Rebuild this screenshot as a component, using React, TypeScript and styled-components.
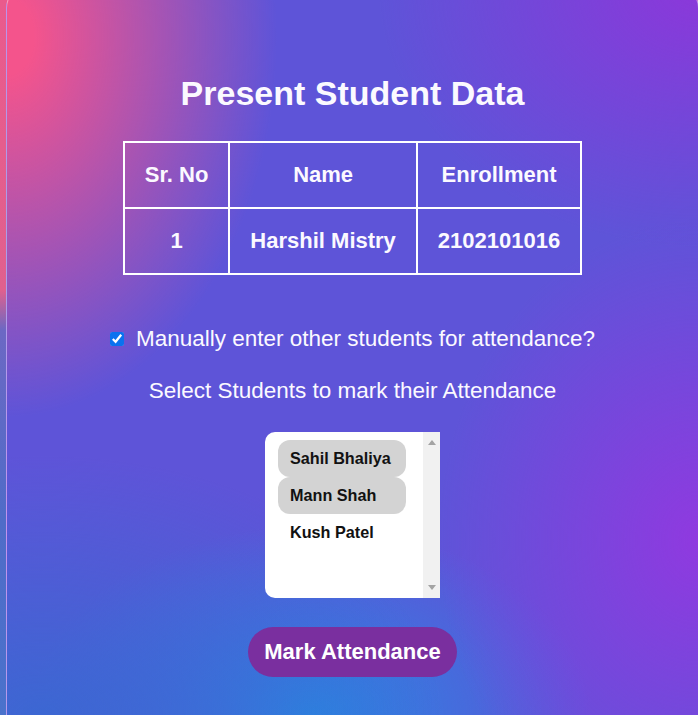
import React, { useState } from "react";
import styled, { createGlobalStyle } from "styled-components";

const GlobalStyle = createGlobalStyle`
  html, body {
    margin: 0;
    padding: 0;
    height: 715px;
    overflow: hidden;
  }
  body {
    font-family: "Liberation Sans", Arial, sans-serif;
    background: linear-gradient(
      to bottom,
      #ea5a8c 0px,
      #e0608e 290px,
      #6c68c4 330px,
      #4f6cc8 520px,
      #4a72cc 715px
    );
  }
`;

const Card = styled.div`
  margin: -14px 0 0 6px;
  width: 693px;
  height: 729px;
  box-sizing: border-box;
  border: 1px solid rgba(255, 255, 255, 0.45);
  border-bottom: 0;
  border-radius: 22px 22px 0 0;
  display: flex;
  flex-direction: column;
  align-items: center;
  color: #fbf9ff;
  background:
    radial-gradient(ellipse 270px 380px at 0px 50px, rgba(244, 84, 140, 1) 10%, rgba(244, 84, 140, 0) 100%),
    radial-gradient(ellipse 320px 260px at 100% 0%, rgba(142, 54, 218, 0.95), rgba(142, 54, 218, 0) 100%),
    radial-gradient(ellipse 260px 320px at 100% 76%, rgba(146, 56, 224, 0.95), rgba(146, 56, 224, 0) 100%),
    radial-gradient(ellipse 400px 260px at 5% 100%, rgba(58, 104, 210, 0.95), rgba(58, 104, 210, 0) 100%),
    radial-gradient(ellipse 280px 190px at 44% 100%, rgba(38, 138, 226, 0.95), rgba(38, 138, 226, 0) 100%),
    #5e54d8;
`;

const Title = styled.h1`
  margin: 87px 0 0;
  font-size: 34px;
  font-weight: bold;
  line-height: 39px;
`;

const Table = styled.table`
  margin-top: 28px;
  border-collapse: collapse;
`;

const Cell = styled.td`
  border: 2px solid #ffffff;
  padding: 19px 20px;
  font-size: 22px;
  line-height: 26px;
  font-weight: bold;
  text-align: center;
  white-space: nowrap;
`;

const CheckRow = styled.label`
  margin-top: 51px;
  display: flex;
  align-items: center;
  gap: 12px;
  font-size: 22.5px;
  line-height: 25px;
`;

const Check = styled.input`
  width: 14px;
  height: 14px;
  margin: 0;
  accent-color: #0b72ef;
`;

const Hint = styled.p`
  margin: 27px 0 0;
  font-size: 22.5px;
  line-height: 25px;
`;

const ListBox = styled.div`
  margin-top: 29px;
  width: 175px;
  height: 166px;
  display: flex;
  background: #ffffff;
  border-radius: 10px 0 0 10px;
  overflow: hidden;
`;

const Options = styled.div`
  flex: 1;
  padding: 8px 17px 8px 13px;
  display: flex;
  flex-direction: column;
`;

const Option = styled.div<{ $selected?: boolean }>`
  height: 37px;
  display: flex;
  align-items: center;
  padding: 0 12px;
  border-radius: 12px;
  font-size: 16.2px;
  font-weight: bold;
  white-space: nowrap;
  color: #111111;
  background: ${(p) => (p.$selected ? "#d3d3d3" : "transparent")};
  cursor: pointer;
`;

const ScrollTrack = styled.div`
  width: 17px;
  background: #f1f1f1;
  display: flex;
  flex-direction: column;
  justify-content: space-between;
  align-items: center;
  padding: 8px 0;
`;

const Arrow = styled.span<{ $down?: boolean }>`
  width: 0;
  height: 0;
  border-left: 4px solid transparent;
  border-right: 4px solid transparent;
  ${(p) =>
    p.$down
      ? "border-top: 5px solid #a3a3a3;"
      : "border-bottom: 5px solid #a3a3a3;"}
`;

const MarkButton = styled.button`
  margin-top: 29px;
  height: 50px;
  padding: 0 16px;
  border: 0;
  border-radius: 25px;
  background: #7a2f9f;
  color: #ffffff;
  font-family: "Liberation Sans", Arial, sans-serif;
  font-size: 22px;
  font-weight: bold;
  cursor: pointer;
`;

const students = ["Sahil Bhaliya", "Mann Shah", "Kush Patel"];

export default function App() {
  const [manual, setManual] = useState(true);
  const [selected, setSelected] = useState<string[]>(["Sahil Bhaliya", "Mann Shah"]);

  const toggle = (name: string) =>
    setSelected((s) => (s.includes(name) ? s.filter((n) => n !== name) : [...s, name]));

  return (
    <>
      <GlobalStyle />
      <Card>
        <Title>Present Student Data</Title>
        <Table>
          <tbody>
            <tr>
              <Cell as="th">Sr. No</Cell>
              <Cell as="th">Name</Cell>
              <Cell as="th">Enrollment</Cell>
            </tr>
            <tr>
              <Cell>1</Cell>
              <Cell>Harshil Mistry</Cell>
              <Cell>2102101016</Cell>
            </tr>
          </tbody>
        </Table>
        <CheckRow>
          <Check type="checkbox" checked={manual} onChange={(e) => setManual(e.target.checked)} />
          Manually enter other students for attendance?
        </CheckRow>
        <Hint>Select Students to mark their Attendance</Hint>
        <ListBox>
          <Options>
            {students.map((s) => (
              <Option key={s} $selected={selected.includes(s)} onClick={() => toggle(s)}>
                {s}
              </Option>
            ))}
          </Options>
          <ScrollTrack>
            <Arrow />
            <Arrow $down />
          </ScrollTrack>
        </ListBox>
        <MarkButton>Mark Attendance</MarkButton>
      </Card>
    </>
  );
}
